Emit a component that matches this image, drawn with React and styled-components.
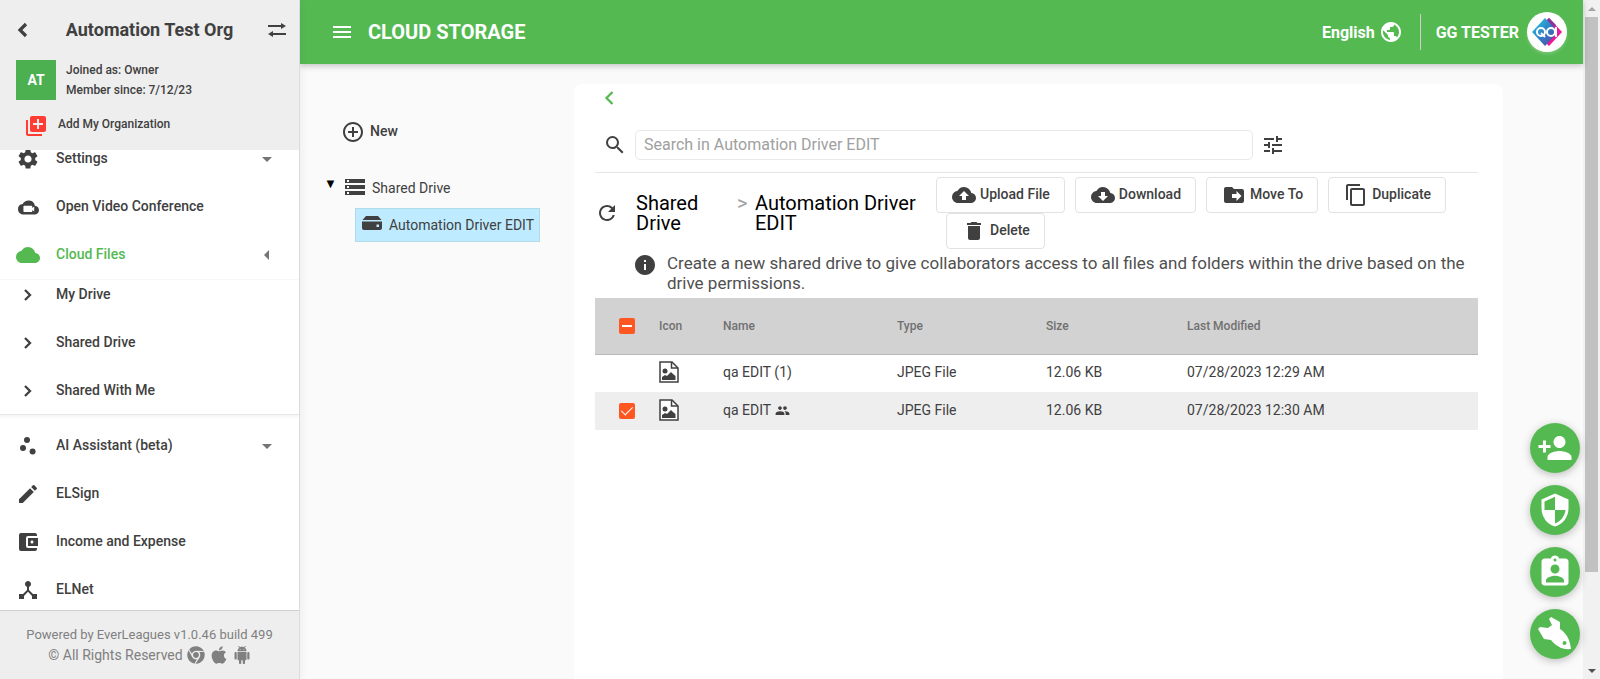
import React from "react";
import styled, { createGlobalStyle, css } from "styled-components";
import {
  MdSettings, MdCloud, MdScatterPlot, MdEdit, MdAccountBalanceWallet,
  MdDeviceHub, MdLibraryAdd, MdAddCircleOutline, MdStorage, MdSearch, MdTune, MdRefresh,
  MdInfo, MdBackup, MdCloudDownload, MdContentCopy, MdDelete, MdPeople, MdPersonAdd,
  MdSecurity, MdAssignmentInd, MdPublic, MdMenu,
  MdArrowDropDown, MdArrowLeft,
} from "react-icons/md";
import { FaChrome, FaApple } from "react-icons/fa";

const GREEN = "#55b952";
const INK = "#404040";

const GlobalStyle = createGlobalStyle`
  *, *::before, *::after { box-sizing: border-box; }
  body { margin: 0; font-family: Roboto, "Liberation Sans", sans-serif; font-size: 14px; color: ${INK}; background: #fafafa; }
  button, input { font: inherit; color: inherit; }
  button { background: none; border: 0; padding: 0; cursor: pointer; }
  a { color: inherit; text-decoration: none; }
  ul { list-style: none; margin: 0; padding: 0; }
  h1, h2, p { margin: 0; }
  svg { display: block; flex: none; }
`;

const Shell = styled.div`display: flex; height: 100vh; overflow: hidden;`;

/* Label beside an icon, raised to the icon's optical centre */
const Label = styled.span`padding-bottom: 2px;`;

/* Sidebar */
const Sidebar = styled.aside`
  position: relative; z-index: 2; display: flex; flex-direction: column; flex: none; width: 300px;
  background: #fff; border-right: 1px solid #dcdcdc; box-shadow: 1px 0 8px rgba(0,0,0,.06);
`;
const OrgHeader = styled.header`flex: none; height: 150px; background: #eee; padding: 16px 12px 0 16px;`;
const OrgTop = styled.div`display: flex; align-items: center; height: 28px;`;
const OrgName = styled.h2`flex: 1; padding-left: 4px; font-size: 18px; font-weight: 700; line-height: 28px; text-align: center;`;
const IconButton = styled.button`display: flex; align-items: center; color: ${(p) => p.$color || INK};`;
const OrgInfo = styled.div`display: flex; gap: 10px; margin-top: 16px; font-size: 12px; line-height: 20px; font-weight: 500;`;
const OrgBadge = styled.div`
  display: grid; place-items: center; width: 40px; height: 40px;
  background: #4caf50; color: #fff; font-size: 14px; font-weight: 700;
`;
const AddOrg = styled.button`
  display: flex; align-items: center; gap: 10px; height: 24px; margin: 14px 0 0 8px;
  font-size: 12px; font-weight: 500;
  svg { color: #ff3d32; }
  span { padding-bottom: 4px; }
`;
const Nav = styled.nav`flex: 1; min-height: 0; overflow: hidden; font-weight: 500;`;
const NavList = styled.ul`margin-top: ${(p) => p.$shift || 0}px;`;
const SubList = styled.ul`
  height: 136px; margin-bottom: 7px; border-top: 1px solid #f7f7f7; border-bottom: 1px solid #e8e8e8; box-shadow: 0 2px 3px rgba(0,0,0,.05);
  & > li:first-child { margin-top: -9px; }
`;
const NavLink = styled.a`
  display: flex; align-items: center; height: 48px; padding: 0 20px 0 16px;
  color: ${(p) => (p.$active ? GREEN : INK)};
  .caret { color: #757575; }
`;
const NavLabel = styled(Label)`flex: 1; margin-left: 16px;`;
const NavIcon = styled.i`display: grid; place-items: center; width: 24px; height: 24px;`;
const SideFooter = styled.footer`
  flex: none; height: 69px; padding-top: 14px; border-top: 1px solid #d0d0d0; background: #eee;
  color: #808080; font-size: 13px; line-height: 20px; text-align: center;
`;
const FooterLine = styled.div`display: flex; align-items: center; justify-content: center; gap: 4px; font-size: 14px;`;

/* Main */
const Main = styled.div`display: flex; flex-direction: column; flex: 1; min-width: 0;`;
const TopBar = styled.header`
  display: flex; align-items: center; flex: none; height: 64px; padding: 0 16px 0 30px;
  background: ${GREEN}; color: #fff; box-shadow: 0 2px 6px rgba(0,0,0,.22); z-index: 1;
`;
const PageTitle = styled.h1`flex: 1; margin-left: 14px; font-size: 20px; font-weight: 700;`;
const TopButton = styled.button`display: flex; align-items: center; gap: ${(p) => p.$gap}px; font-size: 16px; font-weight: 700;`;
const Separator = styled.span`width: 1px; height: 36px; margin: 0 15px 0 17px; background: #d0d0d0;`;
const Avatar = styled.span`
  display: grid; place-items: center; width: 40px; height: 40px; border-radius: 50%;
  background: #fff; box-shadow: 0 2px 3px rgba(255,255,255,.2);
`;
const Body = styled.div`display: flex; flex: 1; min-height: 0; padding: 20px 80px 0 0;`;
const Tree = styled.section`flex: none; width: 274px; padding: 36px 0 0 24px;`;
const NewButton = styled.button`display: flex; align-items: center; gap: 5px; height: 24px; margin-left: 17px; font-weight: 500;`;
const TreeRow = styled.div`display: flex; align-items: center; height: 24px; margin-top: 31px;`;
const Toggle = styled.button`display: flex; width: 10px; margin: -6px 9px 0 0; font-size: 13px; line-height: 16px; color: #000;`;
const TreeLink = styled.a`
  display: flex; align-items: center; gap: 5px;
  span { padding-top: 2px; }
  ${(p) => p.$selected && css`
    width: max-content; height: 34px; gap: 7px; margin: 9px 0 0 31px; padding: 0 5px 0 6px;
    background: #beebff; border: 1px solid #b2dbea;
    span { padding-top: 0; }
    svg { margin-bottom: 4px; }
  `}
`;
const Card = styled.main`flex: 1; min-width: 0; padding: 0 25px 0 21px; background: #fff; border-radius: 8px 8px 0 0;`;
const BackButton = styled(IconButton)`height: 28px; margin-left: 2px;`;
const SearchRow = styled.form`
  display: flex; align-items: center; height: 61px; padding: 5px 193px 0 8px; border-bottom: 1px solid #e6e6e6;
`;
const SearchInput = styled.input`
  flex: 1; min-width: 0; height: 30px; margin: 0 8px; padding: 0 8px; border: 1px solid #e8e8e8;
  border-radius: 5px; background: #fff; font-size: 16px; outline: none;
  &::placeholder { color: #a0a0a0; opacity: 1; }
`;
const Toolbar = styled.div`display: flex; align-items: center; padding-top: 4px;`;
const Crumbs = styled.nav`display: flex; flex: none; width: 300px; margin-left: 17px; font-size: 20px; line-height: 20px; color: #000;`;
const Crumb = styled.a`width: ${(p) => p.$w}px;`;
const CrumbArrow = styled.span`width: 18px; color: #a0a0a0;`;
const Actions = styled.div`display: flex; flex-wrap: wrap; flex: 1; min-width: 0; margin-left: -10px;`;
const ActionButton = styled.button`
  display: flex; align-items: center; gap: 4px; height: 36px; margin-left: 10px; padding: 0 14px 0 15px;
  border: 1px solid #e2e2e2; border-radius: 4px; background: #fff; font-weight: 500;
  &:last-child { margin-left: 20px; }
`;
const Notice = styled.p`
  display: flex; align-items: flex-start; gap: 10px; padding: 4px 0 5px 38px;
  font-size: 17px; line-height: 20px; color: #505050;
  svg { color: ${INK}; }
`;
const FileTable = styled.table`
  width: 100%; border-collapse: collapse; table-layout: fixed; text-align: left;
  th, td { padding: 0; }
  thead th { height: 56px; background: #d2d2d2; border-bottom: 1px solid #b8b8b8; color: #707070; font-size: 12px; font-weight: 500; }
  td { height: 38px; }
`;
const FileRow = styled.tr`background: ${(p) => (p.$selected ? "#eee" : "#fff")};`;
const Cell = styled.span`display: flex; align-items: center; gap: 4px; padding-bottom: 2px;`;
const Check = styled.input`
  appearance: none; display: grid; place-items: center; width: 16px; height: 16px; margin: 0 0 0 24px;
  background: #ff5722; border-radius: 2px;
  &::after {
    content: "";
    ${(p) => p.$mixed
      ? css`width: 10px; height: 2px; background: #fff;`
      : css`width: 6px; height: 11px; margin-bottom: 3px; border: solid #fff; border-width: 0 1px 1px 0; transform: rotate(45deg);`}
  }
`;

/* Floating buttons and scroll bar */
const FabStack = styled.div`position: fixed; right: 20px; bottom: 20px; display: grid; gap: 12px;`;
const Fab = styled.button`
  display: grid; place-items: center; width: 50px; height: 50px; border-radius: 50%;
  background: ${GREEN}; color: #fff; box-shadow: 0 2px 8px rgba(0,0,0,.25);
`;
const ScrollTrack = styled.div`
  display: flex; flex-direction: column; align-items: center; flex: none; width: 17px; background: #f1f1f1;
`;
const ScrollArrow = styled.span`
  display: grid; place-items: center; width: 17px; height: 17px;
  &::after {
    content: ""; border: solid transparent; border-width: 0 4px;
    ${(p) => p.$up ? css`border-bottom: 4px solid #a3a3a3;` : css`border-top: 4px solid #505050;`}
  }
`;
const ScrollRange = styled.div`flex: 1; width: 13px;`;
const ScrollThumb = styled.div`height: 86%; background: #c1c1c1;`;

const ThickChevron = () => (
  <svg width="12" height="16" viewBox="0 0 12 16"><path d="M10 2 4 8l6 6" fill="none" stroke="currentColor" strokeWidth="3.2" /></svg>
);
const Chevron = ({ left }) => (
  <svg width="24" height="24" viewBox="0 0 24 24"><path d={left ? "M15.500 6 9.500 12l6 6" : "M9 7l5 5-5 5"} fill="none" stroke="currentColor" strokeWidth="2.300" /></svg>
);
const Swap = () => (
  <svg width="20" height="16" viewBox="0 0 20 16"><path d="M1 4h14M5 12h14" stroke="currentColor" strokeWidth="2" /><path d="M14 1l5 3-5 3zM6 9l-5 3 5 3z" fill="currentColor" /></svg>
);
const VideoCloud = () => (
  <svg width="21" height="21" viewBox="0 0 24 24"><path fill="currentColor" fillRule="evenodd" d="M19.350 10.040A7.490 7.490 0 0 0 12 4C9.110 4 6.600 5.640 5.350 8.040A5.994 5.994 0 0 0 0 14c0 3.310 2.690 6 6 6h13c2.760 0 5-2.240 5-5 0-2.640-2.050-4.780-4.650-4.960zM7 10h8.500a.8.8 0 0 1 .8.800V12.500l2.200-1.700v5.700l-2.200-1.700v1.500a.8.8 0 0 1-.8.800H7a.8.8 0 0 1-.8-.8V10.800A.8.8 0 0 1 7 10z" /></svg>
);
const DriveIcon = () => (
  <svg width="20" height="14" viewBox="0 0 20 14"><path fill="currentColor" fillRule="evenodd" d="M4 0h12l3.500 4h-19zM0 5.500h20V12a2 2 0 0 1-2 2H2a2 2 0 0 1-2-2zM14.500 8.500v2.500h2.500V8.500z" /></svg>
);
const MoveIcon = () => (
  <svg width="24" height="24" viewBox="0 0 24 24"><path fill="currentColor" fillRule="evenodd" d="M4 4h6l2 2h8a2 2 0 0 1 2 2v10a2 2 0 0 1-2 2H4a2 2 0 0 1-2-2V6c0-1.100.9-2 2-2zM14.500 8v3H10v4h4.500v3l5-5z" /></svg>
);
const ImageFile = () => (
  <svg width="20" height="22" viewBox="0 0 20 22"><path d="M1 1h12l6 6v14H1z" fill="#fff" stroke="currentColor" strokeWidth="1.500" /><path d="M12.500 1v6H19" fill="none" stroke="currentColor" strokeWidth="1.500" /><circle cx="6" cy="10" r="2.500" fill="currentColor" /><path d="M3 19v-3l3-2 2 1 4-4 2 2 2.500 2V19z" fill="currentColor" /></svg>
);
const AndroidRobot = () => (
  <svg width="18" height="18" viewBox="0 0 24 24"><path fill="currentColor" d="M6 18c0 .55.45 1 1 1h1v3.500c0 .83.67 1.500 1.500 1.500s1.500-.67 1.500-1.500V19h2v3.500c0 .83.67 1.500 1.500 1.500s1.500-.67 1.500-1.500V19h1c.55 0 1-.45 1-1V8H6v10zM3.500 8C2.670 8 2 8.670 2 9.500v7c0 .83.67 1.500 1.500 1.500S5 17.330 5 16.500v-7C5 8.670 4.330 8 3.500 8zm17 0c-.83 0-1.500.67-1.500 1.500v7c0 .83.67 1.500 1.500 1.500s1.500-.67 1.500-1.500v-7c0-.83-.67-1.500-1.500-1.500zm-4.970-5.840l1.300-1.300c.2-.2.2-.51 0-.71-.2-.2-.51-.2-.71 0l-1.480 1.480C13.850 1.230 12.950 1 12 1c-.96 0-1.860.23-2.660.63L7.850.15c-.2-.2-.51-.2-.71 0-.2.2-.2.51 0 .71l1.310 1.310C6.970 3.260 6 5.010 6 7h12c0-1.990-.97-3.750-2.470-4.840zM10 5H9V4h1v1zm5 0h-1V4h1v1z" /></svg>
);
const QaLogo = () => (
  <svg width="32" height="28" viewBox="0 0 32 28">
    <defs><linearGradient id="qa" x1="0" y1="0" x2="1" y2="1"><stop offset="0" stopColor="#27cfe8" /><stop offset=".5" stopColor="#2f7fc4" /><stop offset="1" stopColor="#5d3da0" /></linearGradient></defs>
    <path d="M18 0 31 14 18 28l-3-3 11-11L15 3z" fill="#ee1796" />
    <path d="M18 0 25 7l-4 4-6-8z" fill="#8a3399" />
    <path d="M14 0 27 14 14 28 1 14z" fill="url(#qa)" />
    <g fill="none" stroke="#fff" strokeWidth="2"><circle cx="10" cy="14" r="4" /><path d="m10 15 4 4" /><circle cx="20" cy="14" r="4" /><path d="M25 9v10" /></g>
  </svg>
);
const Rocket = () => (
  <svg width="34" height="34" viewBox="0 0 34 34"><path fill="currentColor" fillRule="evenodd" d="M13 0 22 5v7c6 4 10 10 11 20-9 1-15-3-20-9L6 22 0 12l2-2 8 1 4-3-3-6zM26.500 24a2 2 0 1 0 0 4 2 2 0 0 0 0-4z" /></svg>
);

const Item = ({ icon, label, active, caret }) => (
  <li>
    <NavLink href="#" $active={active}>
      <NavIcon>{icon}</NavIcon>
      <NavLabel>{label}</NavLabel>
      {caret === "down" && <MdArrowDropDown className="caret" size={24} />}
      {caret === "left" && <MdArrowLeft className="caret" size={24} />}
    </NavLink>
  </li>
);

const actions = [
  { label: "Upload File", icon: <MdBackup size={24} /> },
  { label: "Download", icon: <MdCloudDownload size={24} /> },
  { label: "Move To", icon: <MoveIcon /> },
  { label: "Duplicate", icon: <MdContentCopy size={24} /> },
  { label: "Delete", icon: <MdDelete size={24} /> },
];

const files = [
  { name: "qa EDIT (1)", date: "07/28/2023 12:29 AM" },
  { name: "qa EDIT", date: "07/28/2023 12:30 AM", selected: true },
];

export default function App() {
  return (
    <>
      <GlobalStyle />
      <Shell>
        <Sidebar>
          <OrgHeader>
            <OrgTop>
              <IconButton aria-label="Back"><ThickChevron /></IconButton>
              <OrgName>Automation Test Org</OrgName>
              <IconButton aria-label="Switch organization"><Swap /></IconButton>
            </OrgTop>
            <OrgInfo>
              <OrgBadge>AT</OrgBadge>
              <div>Joined as: Owner<br />Member since: 7/12/23</div>
            </OrgInfo>
            <AddOrg><MdLibraryAdd size={24} /><span>Add My Organization</span></AddOrg>
          </OrgHeader>
          <Nav>
            <NavList $shift={-15}>
              <Item icon={<MdSettings size={24} />} label="Settings" caret="down" />
              <Item icon={<VideoCloud />} label="Open Video Conference" />
              <Item icon={<MdCloud size={24} />} label="Cloud Files" active caret="left" />
            </NavList>
            <SubList>
              {["My Drive", "Shared Drive", "Shared With Me"].map((t) => (
                <Item key={t} icon={<Chevron />} label={t} />
              ))}
            </SubList>
            <NavList>
              <Item icon={<MdScatterPlot size={24} />} label="AI Assistant (beta)" caret="down" />
              <Item icon={<MdEdit size={24} />} label="ELSign" />
              <Item icon={<MdAccountBalanceWallet size={24} />} label="Income and Expense" />
              <Item icon={<MdDeviceHub size={24} />} label="ELNet" />
            </NavList>
          </Nav>
          <SideFooter>
            <div>Powered by EverLeagues v1.0.46 build 499</div>
            <FooterLine>© All Rights Reserved <FaChrome size={18} /><FaApple size={20} /><AndroidRobot /></FooterLine>
          </SideFooter>
        </Sidebar>
        <Main>
          <TopBar>
            <IconButton $color="#fff" aria-label="Menu"><MdMenu size={24} /></IconButton>
            <PageTitle>CLOUD STORAGE</PageTitle>
            <TopButton $gap={4}>English <MdPublic size={24} /></TopButton>
            <Separator />
            <TopButton $gap={8}>GG TESTER <Avatar><QaLogo /></Avatar></TopButton>
          </TopBar>
          <Body>
            <Tree>
              <NewButton><MdAddCircleOutline size={24} /><Label>New</Label></NewButton>
              <TreeRow>
                <Toggle aria-label="Collapse">▼</Toggle>
                <TreeLink href="#"><MdStorage size={24} /><span>Shared Drive</span></TreeLink>
              </TreeRow>
              <TreeLink href="#" $selected><DriveIcon /><span>Automation Driver EDIT</span></TreeLink>
            </Tree>
            <Card>
              <BackButton $color={GREEN} aria-label="Back"><Chevron left /></BackButton>
              <SearchRow>
                <MdSearch size={24} />
                <SearchInput aria-label="Search" placeholder="Search in Automation Driver EDIT" />
                <IconButton type="button" aria-label="Filters"><MdTune size={24} /></IconButton>
              </SearchRow>
              <Toolbar>
                <IconButton aria-label="Refresh"><MdRefresh size={24} /></IconButton>
                <Crumbs>
                  <Crumb href="#" $w={101}>Shared Drive</Crumb>
                  <CrumbArrow>&gt;</CrumbArrow>
                  <Crumb href="#" $w={180}>Automation Driver EDIT</Crumb>
                </Crumbs>
                <Actions>
                  {actions.map((a) => (
                    <ActionButton key={a.label}>{a.icon}<Label>{a.label}</Label></ActionButton>
                  ))}
                </Actions>
              </Toolbar>
              <Notice>
                <MdInfo size={24} />
                Create a new shared drive to give collaborators access to all files and folders within the drive based on the drive permissions.
              </Notice>
              <FileTable>
                <colgroup>
                  <col width="64" /><col width="64" /><col width="174" /><col width="149" /><col width="141" /><col />
                </colgroup>
                <thead>
                  <tr>
                    <th><Check type="checkbox" $mixed defaultChecked aria-label="Select all" /></th>
                    <th>Icon</th><th>Name</th><th>Type</th><th>Size</th><th>Last Modified</th>
                  </tr>
                </thead>
                <tbody>
                  {files.map((f) => (
                    <FileRow key={f.name} $selected={f.selected}>
                      <td>{f.selected && <Check type="checkbox" defaultChecked aria-label={f.name} />}</td>
                      <td><Cell><ImageFile /></Cell></td>
                      <td><Cell>{f.name}{f.selected && <MdPeople size={15} />}</Cell></td>
                      <td><Cell>JPEG File</Cell></td>
                      <td><Cell>12.06 KB</Cell></td>
                      <td><Cell>{f.date}</Cell></td>
                    </FileRow>
                  ))}
                </tbody>
              </FileTable>
            </Card>
          </Body>
        </Main>
        <ScrollTrack aria-hidden="true">
          <ScrollArrow $up />
          <ScrollRange><ScrollThumb /></ScrollRange>
          <ScrollArrow />
        </ScrollTrack>
      </Shell>
      <FabStack>
        <Fab aria-label="Add person"><MdPersonAdd size={36} /></Fab>
        <Fab aria-label="Security"><MdSecurity size={36} /></Fab>
        <Fab aria-label="Assignments"><MdAssignmentInd size={36} /></Fab>
        <Fab aria-label="Launch"><Rocket /></Fab>
      </FabStack>
    </>
  );
}
